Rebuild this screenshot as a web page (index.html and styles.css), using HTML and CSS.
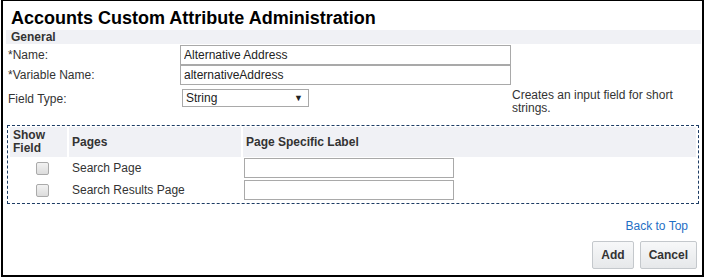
FILE: index.html
```html
<!DOCTYPE html>
<html>
<head>
<meta charset="utf-8">
<link rel="stylesheet" href="styles.css">
</head>
<body>
<div class="frame">
  <h1 class="title">Accounts Custom Attribute Administration</h1>
  <div class="section-head">General</div>
  <div class="form">
    <div class="row">
      <label class="lbl">*Name:</label>
      <input class="txt wide" type="text" value="Alternative Address">
    </div>
    <div class="row">
      <label class="lbl">*Variable Name:</label>
      <input class="txt wide" type="text" value="alternativeAddress">
    </div>
    <div class="row row-type">
      <label class="lbl">Field Type:</label>
      <div class="select"><span>String</span><span class="arrow">&#9660;</span></div>
      <div class="help">Creates an input field for short strings.</div>
    </div>
  </div>
  <div class="pages-box">
    <table class="pages">
      <thead>
        <tr>
          <th class="c-show">Show<br>Field</th>
          <th class="c-page">Pages</th>
          <th class="c-label">Page Specific Label</th>
        </tr>
      </thead>
      <tbody>
        <tr>
          <td class="c-show"><span class="cb"></span></td>
          <td class="c-page">Search Page</td>
          <td class="c-label"><input class="txt small" type="text"></td>
        </tr>
        <tr>
          <td class="c-show"><span class="cb"></span></td>
          <td class="c-page">Search Results Page</td>
          <td class="c-label"><input class="txt small" type="text"></td>
        </tr>
      </tbody>
    </table>
  </div>
  <div class="footer">
    <a class="top-link" href="#">Back to Top</a>
    <div class="buttons">
      <button class="btn">Add</button>
      <button class="btn">Cancel</button>
    </div>
  </div>
</div>
</body>
</html>
```
FILE: styles.css
```css
html, body {
  margin: 0;
  padding: 0;
  background: #fff;
}
body {
  font-family: "Liberation Sans", Arial, sans-serif;
  font-size: 12px;
  color: #222;
}
.frame {
  box-sizing: border-box;
  width: 703px;
  height: 277px;
  margin-left: 1px;
  border: 2px solid #000;
  border-top-width: 1px;
  padding: 6px 1px 0 3px;
}
.title {
  margin: 0 0 0 5px;
  font-size: 18px;
  font-weight: bold;
  line-height: 23px;
  color: #000;
}
.section-head {
  background: #f0f1f5;
  font-weight: bold;
  color: #333;
  padding: 0 5px;
  height: 14px;
  line-height: 14px;
}
.form {
  padding: 1px 0 0 2px;
}
.row {
  display: flex;
  align-items: center;
  height: 20px;
}
.lbl {
  width: 172px;
  color: #333;
}
.txt {
  box-sizing: border-box;
  border: 1px solid #a9a9a9;
  font-family: "Liberation Sans", Arial, sans-serif;
  font-size: 12px;
  color: #222;
  padding: 0 3px;
  margin: 0;
  background: #fff;
}
.wide {
  width: 331px;
  height: 20px;
}
.row-type {
  height: 27px;
  align-items: flex-start;
  padding-top: 4px;
}
.row-type .lbl {
  padding-top: 3px;
}
.select {
  box-sizing: border-box;
  margin-left: 2px;
  width: 127px;
  height: 18px;
  border: 1px solid #a9a9a9;
  display: flex;
  justify-content: space-between;
  align-items: center;
  padding: 0 5px 0 3px;
  color: #222;
}
.arrow {
  font-size: 9px;
}
.help {
  margin-left: 201px;
  padding-left: 2px;
  width: 180px;
  line-height: 13px;
  color: #333;
}
.pages-box {
  margin: 9px 0 0 1px;
  width: 692px;
  box-sizing: border-box;
  border: 1px dashed #1d3c64;
  padding: 1px 0;
  height: 79px;
}
.pages {
  border-collapse: separate;
  border-spacing: 2px 0;
  width: 100%;
}
.pages th {
  background: #f0f1f5;
  text-align: left;
  font-weight: bold;
  color: #333;
  height: 30px;
  padding: 0 3px;
  line-height: 13px;
}
.pages td {
  height: 22px;
  padding: 0 3px;
  color: #333;
}
.c-show { width: 49px; }
.c-page { width: 166px; }
.pages td.c-show { text-align: center; padding-left: 8px; padding-right: 0; }
.cb {
  display: inline-block;
  width: 11px;
  height: 11px;
  border: 1px solid #aaa;
  border-radius: 2px;
  background: linear-gradient(#f2f2f2, #dcdcdc);
  vertical-align: middle;
}
.pages td.c-label { padding-left: 1px; }
.small {
  width: 210px;
  height: 20px;
}
.footer {
  display: flex;
  flex-direction: column;
  align-items: flex-end;
  padding-right: 13px;
}
.top-link {
  margin-top: 15px;
  color: #1f6fc5;
  text-decoration: none;
  line-height: 14px;
}
.buttons {
  display: flex;
  gap: 6px;
  margin-top: 8px;
  margin-right: -9px;
}
.btn {
  box-sizing: border-box;
  height: 28px;
  padding: 0 8px;
  border: 1px solid #c4c8cc;
  border-radius: 2px;
  background: linear-gradient(#f7f8f9, #e6e8ea);
  font-family: "Liberation Sans", Arial, sans-serif;
  font-size: 12px;
  font-weight: bold;
  color: #333;
}
```
